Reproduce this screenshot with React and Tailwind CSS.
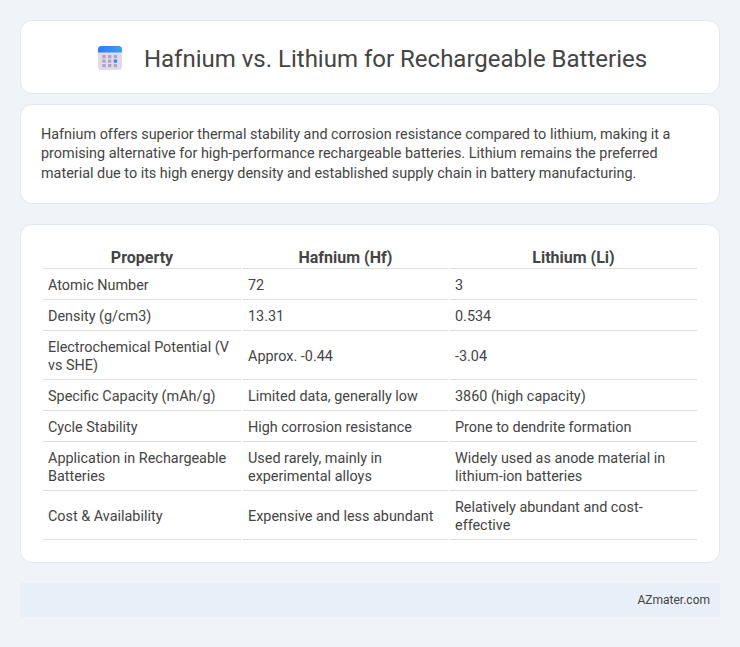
import React from "react";

const rows = [
  ["Atomic Number", "72", "3"],
  ["Density (g/cm3)", "13.31", "0.534"],
  ["Electrochemical Potential (V vs SHE)", "Approx. -0.44", "-3.04"],
  ["Specific Capacity (mAh/g)", "Limited data, generally low", "3860 (high capacity)"],
  ["Cycle Stability", "High corrosion resistance", "Prone to dendrite formation"],
  ["Application in Rechargeable Batteries", "Used rarely, mainly in experimental alloys", "Widely used as anode material in lithium-ion batteries"],
  ["Cost & Availability", "Expensive and less abundant", "Relatively abundant and cost-effective"],
];

const CalendarIcon = () => (
  <svg width="24" height="24" viewBox="0 0 24 24" className="mt-[2px] shrink-0">
    <defs>
      <linearGradient id="top" x1="0" y1="0" x2="1" y2="0">
        <stop offset="0" stopColor="#2f7bf6" />
        <stop offset="1" stopColor="#35a2fb" />
      </linearGradient>
    </defs>
    <rect x="0" y="0" width="24" height="24" rx="3.5" fill="#e2d9ef" />
    <path d="M0 6.5V3.5A3.5 3.5 0 0 1 3.5 0h17A3.5 3.5 0 0 1 24 3.5V6.5z" fill="url(#top)" />
    {[9, 13.5, 18].map((y) =>
      [4.3, 10, 15.7].map((x) => (
        <rect key={x + "-" + y} x={x} y={y} width="3.4" height="3.2" fill={x === 15.7 && y === 13.5 ? "#2f8cf6" : "#b0a5bf"} />
      ))
    )}
  </svg>
);

export default function App() {
  return (
    <div className="min-h-[647px] bg-[#f0f4f8] p-5 font-['Roboto',sans-serif] text-[#444]">
      <div className="flex h-[74px] items-center justify-center gap-[22px] rounded-xl border border-[#e2e8f0] bg-white pl-[5px]">
        <CalendarIcon />
        <h1 className="pt-1 text-2xl font-normal">Hafnium vs. Lithium for Rechargeable Batteries</h1>
      </div>

      <div className="mt-[10px] rounded-xl border border-[#e2e8f0] bg-white p-5 text-[14.4px] leading-[1.35]">
        Hafnium offers superior thermal stability and corrosion resistance compared to lithium, making it a promising alternative for high-performance rechargeable batteries. Lithium remains the preferred material due to its high energy density and established supply chain in battery manufacturing.
      </div>

      <div className="mt-5 rounded-xl border border-[#e2e8f0] bg-white p-5">
        <table className="w-full table-fixed border-separate border-spacing-[2px] text-[14.4px] leading-[18px]">
          <thead>
            <tr>
              <th className="w-[198px] border-b border-[#ddd] pt-[2px] pb-[1px] text-[16px] font-bold">Property</th>
              <th className="w-[205px] border-b border-[#ddd] pt-[2px] pb-[1px] text-[16px] font-bold">Hafnium (Hf)</th>
              <th className="border-b border-[#ddd] pt-[2px] pb-[1px] text-[16px] font-bold">Lithium (Li)</th>
            </tr>
          </thead>
          <tbody>
            {rows.map((r) => (
              <tr key={r[0]}>
                {r.map((c, i) => (
                  <td key={i} className="border-b border-[#ddd] px-[5px] pt-[6px] pb-[4px] align-middle">{c}</td>
                ))}
              </tr>
            ))}
          </tbody>
        </table>
      </div>

      <div className="mt-5 flex h-[34px] items-center justify-end bg-[#e8eff8] px-[10px] text-[12px]">
        AZmater.com
      </div>
    </div>
  );
}
